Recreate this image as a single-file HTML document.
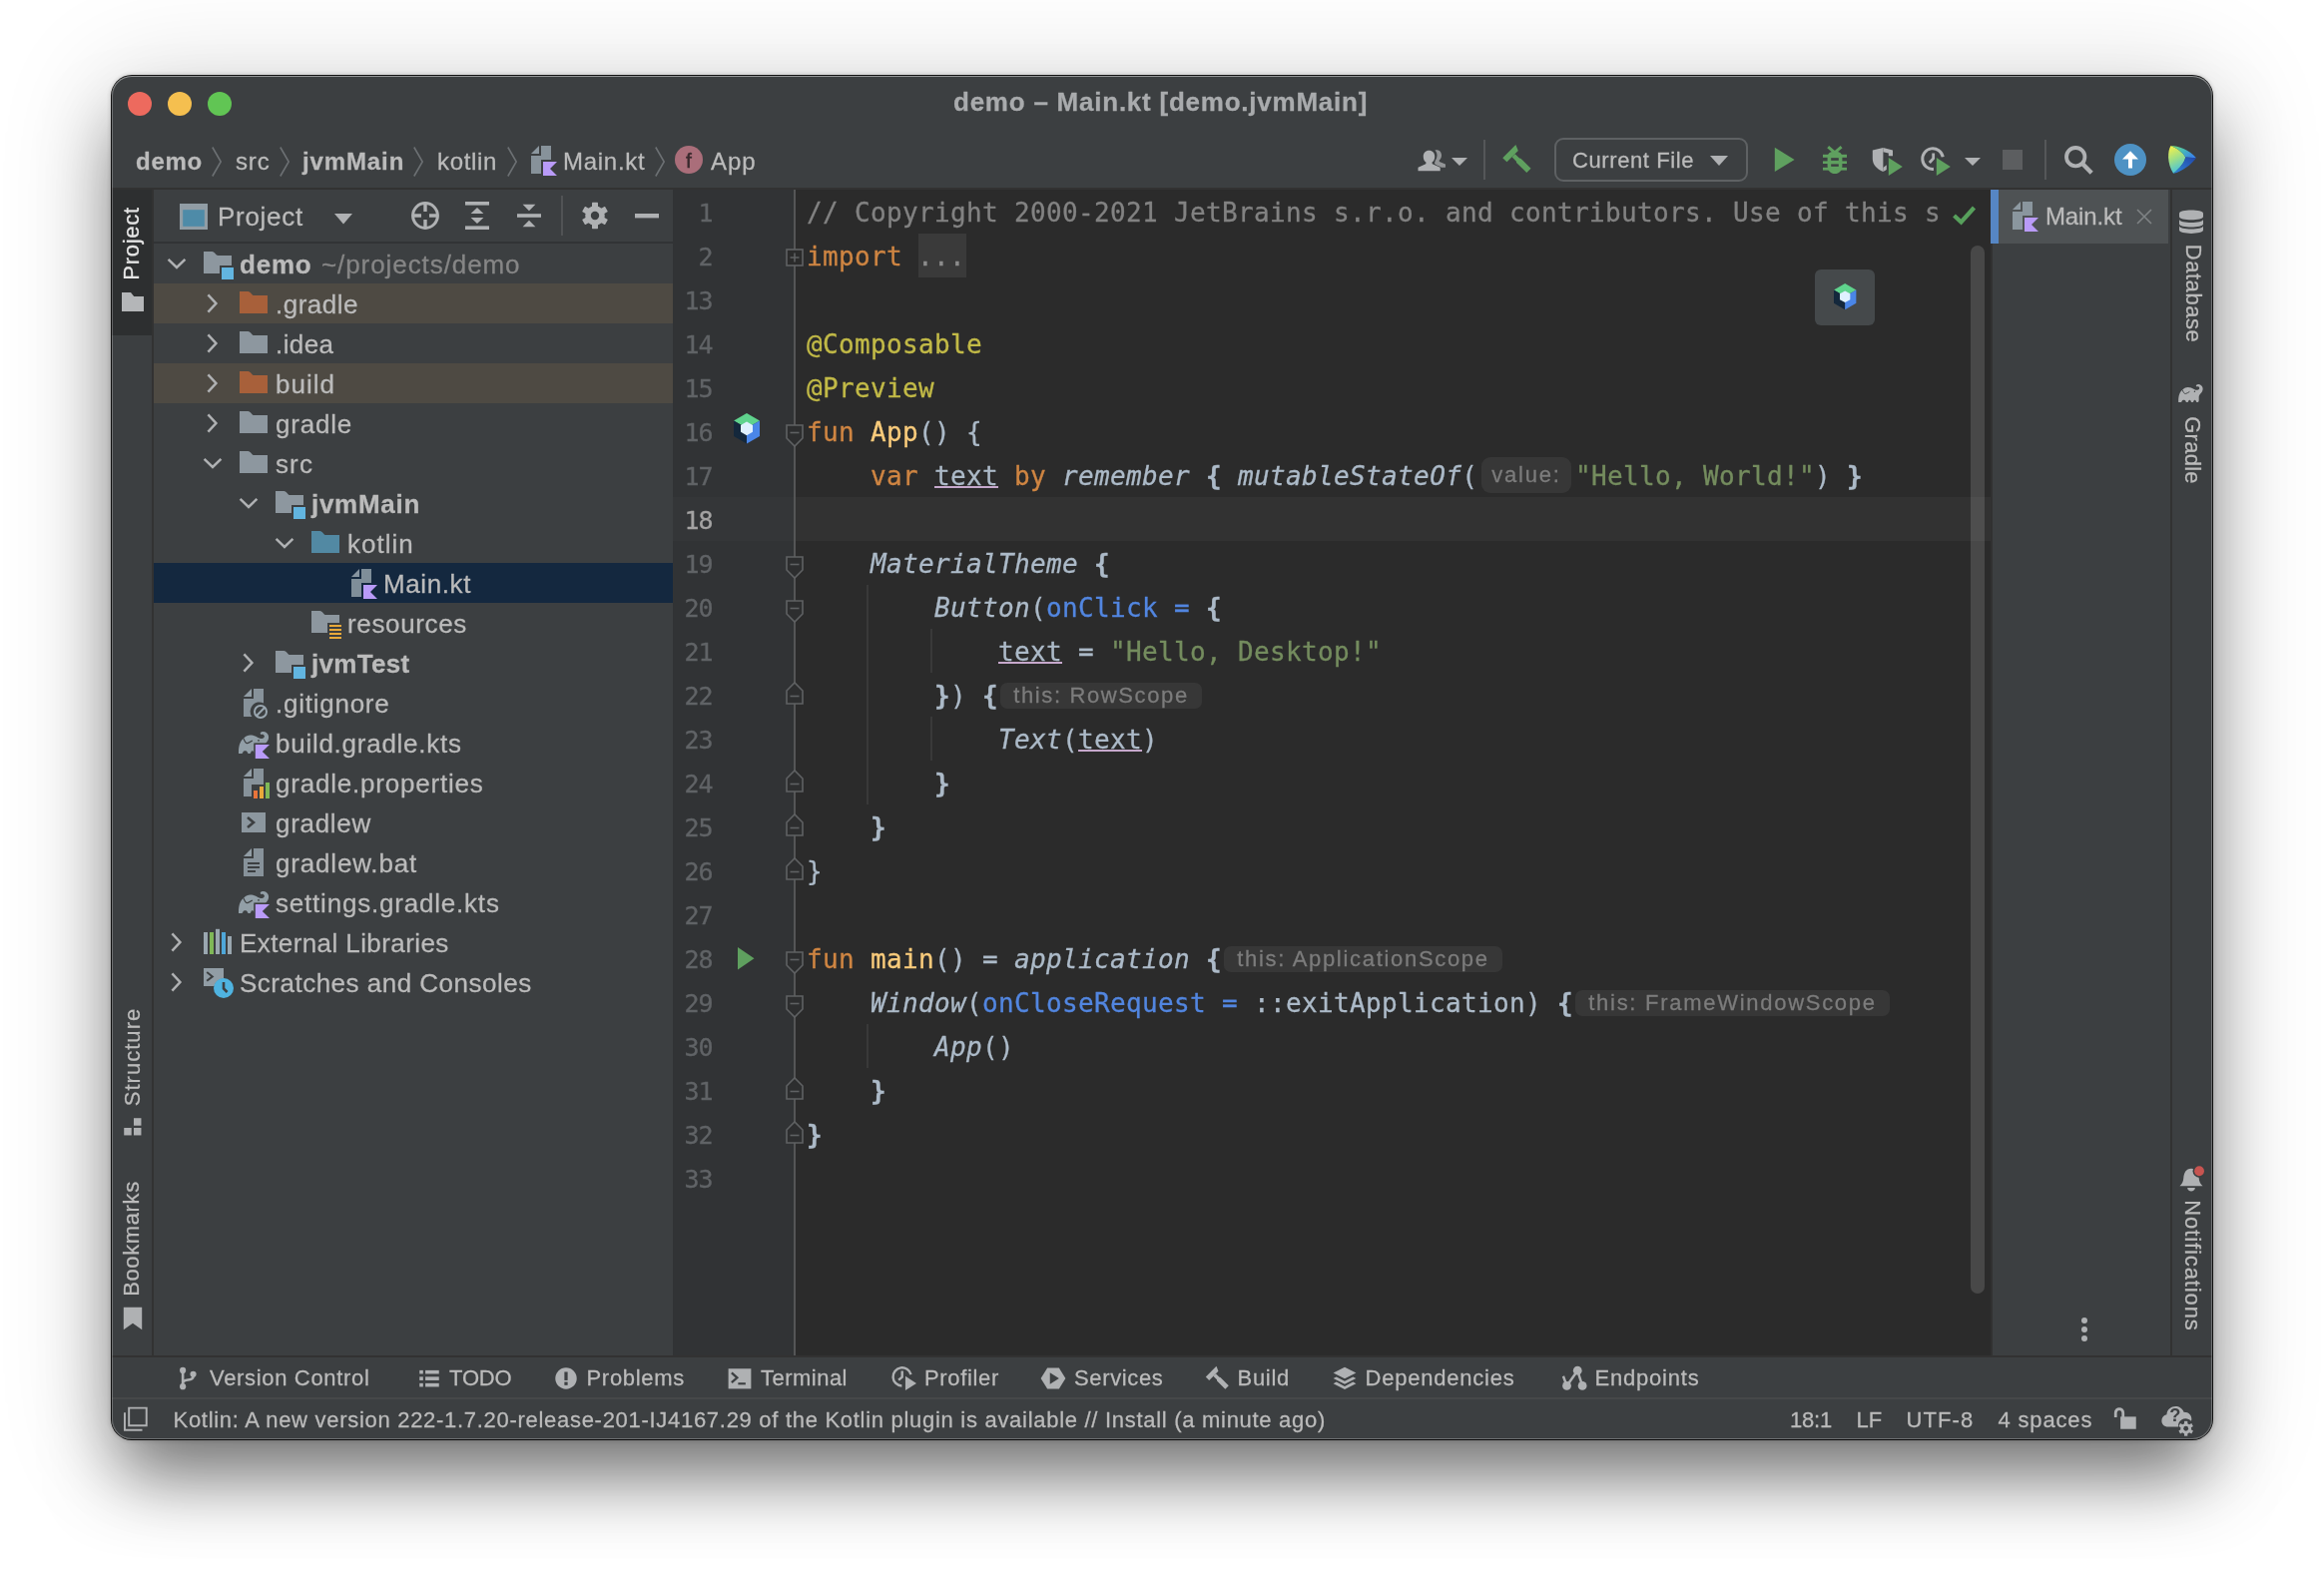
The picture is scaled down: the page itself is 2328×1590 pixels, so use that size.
<!DOCTYPE html>
<html lang="en"><head><meta charset="utf-8"><title>demo – Main.kt [demo.jvmMain]</title>
<style>

*{box-sizing:border-box;margin:0;padding:0}
html,body{width:2328px;height:1590px;overflow:hidden;background:#fff}
body{position:relative;font-family:"Liberation Sans","DejaVu Sans",sans-serif;color:#bbbbbb;-webkit-font-smoothing:antialiased;-webkit-text-stroke:.28px}
/* window shadow */
#shadow{position:absolute;left:112px;top:76px;width:2104px;height:1366px;border-radius:20px;
  box-shadow:0 0 0 1px rgba(0,0,0,.9), 0 0 4px 1px rgba(0,0,0,.2), 0 44px 70px -8px rgba(0,0,0,.50), 0 10px 110px 10px rgba(0,0,0,.14);}
#win{position:absolute;left:112px;top:76px;width:2104px;height:1366px;border-radius:20px;overflow:hidden;background:#3c3f41}
#abs{position:absolute;left:-112px;top:-76px;width:2328px;height:1590px;will-change:transform}
#rim{position:absolute;left:0;top:0;right:0;bottom:0;border-radius:20px;pointer-events:none;
  box-shadow:inset 0 0 0 1px rgba(255,255,255,.26), inset 0 1px 0 0 rgba(255,255,255,.25)}
.a{position:absolute}
.t{position:absolute;white-space:pre;line-height:1}
svg{position:absolute;overflow:visible}
.b{font-weight:bold}
/* fonts sizes */
.f26{font-size:26px}
.f24{font-size:24px}
.f22{font-size:22px}
/* tree */
.row{position:absolute;left:154px;width:520px;height:40px}
.row.ex{background:#4e4a43}
.row.sel{background:#14283f}
.tl{position:absolute;margin-top:1px;font-size:26px;line-height:30px;white-space:pre;color:#bbbbbb;letter-spacing:.35px}
.tl.b{letter-spacing:.1px}
.gray{color:#868686}
/* code */
.mono{font-family:"DejaVu Sans Mono","Liberation Mono",monospace;-webkit-text-stroke:.3px}
.ln{position:absolute;left:674px;width:39.5px;text-align:right;font-size:25px;height:44px;line-height:44px;padding-top:1.5px;color:#606366;white-space:pre;letter-spacing:-1px}
.cl{position:absolute;left:806px;height:44px;line-height:44px;padding-top:1px;font-size:26px;white-space:pre;color:#acbac8;letter-spacing:.348px}
.cl span{display:inline-block;height:44px;vertical-align:top}
.k{color:#cf8542}.c{color:#828282}.an{color:#c2ba47}.fd{color:#f9cb7b}.s{color:#748c5e}.na{color:#5286e0}
.i{font-style:italic}
.u{text-decoration:underline;text-decoration-color:#c6a8cc;text-decoration-thickness:1.7px;text-underline-offset:.5px}
.lb{font-weight:bold}
.hint{position:absolute;height:27px;border-radius:7px;background:#373737;color:#7c7c7c;font-size:22px;line-height:27px;white-space:pre;text-align:center;letter-spacing:.3px}
</style></head>
<body>
<div id="shadow"></div>
<div id="win"><div id="abs">
<div class="a" style="left:112px;top:190px;width:40px;height:1168px;background:#3c3f41"></div>
<div class="a" style="left:112px;top:190px;width:41px;height:146px;background:#2d2f30"></div>
<div class="a" style="left:152px;top:190px;width:2px;height:1168px;background:#323232"></div>
<div class="a" style="left:154px;top:190px;width:520px;height:1168px;background:#3c3f41"></div>
<div class="a" style="left:154px;top:242px;width:520px;height:2px;background:#313335"></div>
<div class="row " style="top:244px"></div>
<svg style="left:161px;top:248px" width="32" height="32" viewBox="0 0 16 16" ><path d="M3.8 5.9 L8 10 L12.2 5.9" fill="none" stroke="#afb1b3" stroke-width="1.25"/></svg>
<svg style="left:204px;top:248px" width="32" height="32" viewBox="0 0 16 16" ><path d="M0 1.95 H4.2 C5.6 1.95 6 4 7.3 4 H14 V9 H8 V13 H0 Z" fill="#8d979f"/><rect x="9" y="10" width="6" height="6" fill="#62b5e0"/></svg>
<div class="tl b" style="left:240px;top:249px;letter-spacing:0.789px">demo</div>
<div class="tl gray" style="left:322px;top:249px;letter-spacing:0.919px">~/projects/demo</div>
<div class="row ex" style="top:284px"></div>
<svg style="left:197px;top:288px" width="32" height="32" viewBox="0 0 16 16" ><path d="M5.7 3.7 L9.7 8 L5.7 12.3" fill="none" stroke="#afb1b3" stroke-width="1.25"/></svg>
<svg style="left:240px;top:288px" width="32" height="32" viewBox="0 0 16 16" ><path d="M0 1.95 H4.2 C5.6 1.95 6 4 7.3 4 H14 V13 H0 Z" fill="#a8603a"/></svg>
<div class="tl" style="left:276px;top:289px;letter-spacing:0.5px">.gradle</div>
<div class="row " style="top:324px"></div>
<svg style="left:197px;top:328px" width="32" height="32" viewBox="0 0 16 16" ><path d="M5.7 3.7 L9.7 8 L5.7 12.3" fill="none" stroke="#afb1b3" stroke-width="1.25"/></svg>
<svg style="left:240px;top:328px" width="32" height="32" viewBox="0 0 16 16" ><path d="M0 1.95 H4.2 C5.6 1.95 6 4 7.3 4 H14 V13 H0 Z" fill="#8d979f"/></svg>
<div class="tl" style="left:276px;top:329px;letter-spacing:0.422px">.idea</div>
<div class="row ex" style="top:364px"></div>
<svg style="left:197px;top:368px" width="32" height="32" viewBox="0 0 16 16" ><path d="M5.7 3.7 L9.7 8 L5.7 12.3" fill="none" stroke="#afb1b3" stroke-width="1.25"/></svg>
<svg style="left:240px;top:368px" width="32" height="32" viewBox="0 0 16 16" ><path d="M0 1.95 H4.2 C5.6 1.95 6 4 7.3 4 H14 V13 H0 Z" fill="#a8603a"/></svg>
<div class="tl" style="left:276px;top:369px;letter-spacing:1.012px">build</div>
<div class="row " style="top:404px"></div>
<svg style="left:197px;top:408px" width="32" height="32" viewBox="0 0 16 16" ><path d="M5.7 3.7 L9.7 8 L5.7 12.3" fill="none" stroke="#afb1b3" stroke-width="1.25"/></svg>
<svg style="left:240px;top:408px" width="32" height="32" viewBox="0 0 16 16" ><path d="M0 1.95 H4.2 C5.6 1.95 6 4 7.3 4 H14 V13 H0 Z" fill="#8d979f"/></svg>
<div class="tl" style="left:276px;top:409px;letter-spacing:0.786px">gradle</div>
<div class="row " style="top:444px"></div>
<svg style="left:197px;top:448px" width="32" height="32" viewBox="0 0 16 16" ><path d="M3.8 5.9 L8 10 L12.2 5.9" fill="none" stroke="#afb1b3" stroke-width="1.25"/></svg>
<svg style="left:240px;top:448px" width="32" height="32" viewBox="0 0 16 16" ><path d="M0 1.95 H4.2 C5.6 1.95 6 4 7.3 4 H14 V13 H0 Z" fill="#8d979f"/></svg>
<div class="tl" style="left:276px;top:449px;letter-spacing:1.109px">src</div>
<div class="row " style="top:484px"></div>
<svg style="left:233px;top:488px" width="32" height="32" viewBox="0 0 16 16" ><path d="M3.8 5.9 L8 10 L12.2 5.9" fill="none" stroke="#afb1b3" stroke-width="1.25"/></svg>
<svg style="left:276px;top:488px" width="32" height="32" viewBox="0 0 16 16" ><path d="M0 1.95 H4.2 C5.6 1.95 6 4 7.3 4 H14 V9 H8 V13 H0 Z" fill="#8d979f"/><rect x="9" y="10" width="6" height="6" fill="#62b5e0"/></svg>
<div class="tl b" style="left:312px;top:489px;letter-spacing:0.71px">jvmMain</div>
<div class="row " style="top:524px"></div>
<svg style="left:269px;top:528px" width="32" height="32" viewBox="0 0 16 16" ><path d="M3.8 5.9 L8 10 L12.2 5.9" fill="none" stroke="#afb1b3" stroke-width="1.25"/></svg>
<svg style="left:312px;top:528px" width="32" height="32" viewBox="0 0 16 16" ><path d="M0 1.95 H4.2 C5.6 1.95 6 4 7.3 4 H14 V13 H0 Z" fill="#5289a3"/></svg>
<div class="tl" style="left:348px;top:529px;letter-spacing:0.999px">kotlin</div>
<div class="row sel" style="top:564px"></div>
<svg style="left:348px;top:568px" width="32" height="32" viewBox="0 0 16 16" ><path d="M6 1 L2 5 H6 Z" fill="#9aa7b0" fill-opacity=".85"/><path d="M7 1 V6 H2 V15 H7 V8 H12 V1 Z" fill="#9aa7b0" fill-opacity=".8"/><path d="M8 9 H15 L11.5 12.5 L15 16 H8 Z" fill="#b99bf8"/></svg>
<div class="tl" style="left:384px;top:569px;letter-spacing:0.598px">Main.kt</div>
<div class="row " style="top:604px"></div>
<svg style="left:312px;top:608px" width="32" height="32" viewBox="0 0 16 16" ><path d="M0 1.95 H4.2 C5.6 1.95 6 4 7.3 4 H14 V8 H8 V13 H0 Z" fill="#8d979f"/><rect x="9" y="9" width="6" height="1" fill="#e8a93a"/><rect x="9" y="11" width="6" height="1" fill="#e8a93a"/><rect x="9" y="13" width="6" height="1" fill="#e8a93a"/><rect x="9" y="15" width="6" height="1" fill="#e8a93a"/></svg>
<div class="tl" style="left:348px;top:609px;letter-spacing:0.649px">resources</div>
<div class="row " style="top:644px"></div>
<svg style="left:233px;top:648px" width="32" height="32" viewBox="0 0 16 16" ><path d="M5.7 3.7 L9.7 8 L5.7 12.3" fill="none" stroke="#afb1b3" stroke-width="1.25"/></svg>
<svg style="left:276px;top:648px" width="32" height="32" viewBox="0 0 16 16" ><path d="M0 1.95 H4.2 C5.6 1.95 6 4 7.3 4 H14 V9 H8 V13 H0 Z" fill="#8d979f"/><rect x="9" y="10" width="6" height="6" fill="#62b5e0"/></svg>
<div class="tl b" style="left:312px;top:649px;letter-spacing:0.308px">jvmTest</div>
<div class="row " style="top:684px"></div>
<svg style="left:238px;top:688px" width="32" height="32" viewBox="0 0 16 16" ><path d="M7 1 L3 5 H7 Z" fill="#9aa7b0" fill-opacity=".9"/><path d="M8 1 V6 H3 V15 H7.2 A4.6 4.6 0 0 1 13 8.2 V1 Z" fill="#9aa7b0" fill-opacity=".8"/><circle cx="11.5" cy="12.5" r="3" fill="none" stroke="#9aa7b0" stroke-width="1"/><path d="M9.4 14.6 L13.6 10.4" stroke="#9aa7b0" stroke-width="1"/></svg>
<div class="tl" style="left:276px;top:689px;letter-spacing:0.753px">.gitignore</div>
<div class="row " style="top:724px"></div>
<svg style="left:240px;top:728px" width="32" height="32" viewBox="0 0 16 16" ><path d="M-0.5 13.5 C-0.6 9.5 0.3 7 2.2 5.7 C3.2 4.7 4.2 4.3 5.3 4.3 C6.8 4.3 8 4.9 9.2 5.5 C10 5.9 10.6 6.1 11.1 6 C12 5.9 12.6 5.3 12.4 4.6 C12.2 3.9 11.4 3.6 10.7 4 L10.3 3.2 C11 2.4 12.4 2.3 13.4 3 C14.4 3.8 14.8 5 14.4 6.2 C14.1 7.2 13.5 7.9 12.8 8.6 C12.3 9.2 12.1 9.8 12.1 10.6 V12.4 C12.1 13.1 11.7 13.5 11.2 13.5 C10.7 13.5 10.4 13.2 10.3 12.7 C10.1 12 9.1 12 8.9 12.7 C8.8 13.2 8.5 13.5 8 13.5 C7.5 13.5 7.2 13.2 7.1 12.7 C6.9 12 5.9 12 5.7 12.7 C5.6 13.2 5.3 13.5 4.8 13.5 C4.3 13.5 4 13.2 3.9 12.7 C3.6 11.9 2 11.9 1.7 12.7 C1.6 13.2 1.2 13.5 0.6 13.5 Z" fill="#9aa7b0" fill-opacity="0.92"/><path d="M2 6 C2.6 7.6 3.2 8.4 3.9 8.3 C4.8 8.1 5.6 7.5 6.4 7" fill="none" stroke="#3c3f41" stroke-width=".55"/><circle cx="9.5" cy="6.9" r=".45" fill="#3c3f41"/><path d="M7.1 8.2 H16 V16.5 H7.1 Z" fill="#3c3f41"/><path d="M7.9 9 H15 L11.4 12.5 L15 16 H7.9 Z" fill="#b99bf8"/></svg>
<div class="tl" style="left:276px;top:729px;letter-spacing:0.738px">build.gradle.kts</div>
<div class="row " style="top:764px"></div>
<svg style="left:238px;top:768px" width="32" height="32" viewBox="0 0 16 16" ><path d="M7 1 L3 5 H7 Z" fill="#9aa7b0" fill-opacity=".9"/><path d="M8 1 V6 H3 V15 H7 V9 H13 V1 Z" fill="#9aa7b0" fill-opacity=".8"/><rect x="8" y="12" width="2" height="4" fill="#e8743a"/><rect x="11" y="10" width="2" height="6" fill="#e8a93a"/><rect x="14" y="8" width="2" height="8" fill="#7fb857"/></svg>
<div class="tl" style="left:276px;top:769px;letter-spacing:0.787px">gradle.properties</div>
<div class="row " style="top:804px"></div>
<svg style="left:238px;top:808px" width="32" height="32" viewBox="0 0 16 16" ><rect x="2" y="3" width="12" height="10" fill="#9aa7b0" fill-opacity=".85"/><path d="M5 5.5 L8 8 L5 10.5" fill="none" stroke="#3c3f41" stroke-width="1.3"/></svg>
<div class="tl" style="left:276px;top:809px;letter-spacing:0.705px">gradlew</div>
<div class="row " style="top:844px"></div>
<svg style="left:238px;top:848px" width="32" height="32" viewBox="0 0 16 16" ><path d="M7 1 L3 5 H7 Z" fill="#9aa7b0" fill-opacity=".9"/><path d="M8 1 V6 H3 V15 H13 V1 Z" fill="#9aa7b0" fill-opacity=".8"/><rect x="5" y="8" width="6" height="1" fill="#3c3f41"/><rect x="5" y="10" width="6" height="1" fill="#3c3f41"/><rect x="5" y="12" width="4" height="1" fill="#3c3f41"/></svg>
<div class="tl" style="left:276px;top:849px;letter-spacing:0.82px">gradlew.bat</div>
<div class="row " style="top:884px"></div>
<svg style="left:240px;top:888px" width="32" height="32" viewBox="0 0 16 16" ><path d="M-0.5 13.5 C-0.6 9.5 0.3 7 2.2 5.7 C3.2 4.7 4.2 4.3 5.3 4.3 C6.8 4.3 8 4.9 9.2 5.5 C10 5.9 10.6 6.1 11.1 6 C12 5.9 12.6 5.3 12.4 4.6 C12.2 3.9 11.4 3.6 10.7 4 L10.3 3.2 C11 2.4 12.4 2.3 13.4 3 C14.4 3.8 14.8 5 14.4 6.2 C14.1 7.2 13.5 7.9 12.8 8.6 C12.3 9.2 12.1 9.8 12.1 10.6 V12.4 C12.1 13.1 11.7 13.5 11.2 13.5 C10.7 13.5 10.4 13.2 10.3 12.7 C10.1 12 9.1 12 8.9 12.7 C8.8 13.2 8.5 13.5 8 13.5 C7.5 13.5 7.2 13.2 7.1 12.7 C6.9 12 5.9 12 5.7 12.7 C5.6 13.2 5.3 13.5 4.8 13.5 C4.3 13.5 4 13.2 3.9 12.7 C3.6 11.9 2 11.9 1.7 12.7 C1.6 13.2 1.2 13.5 0.6 13.5 Z" fill="#9aa7b0" fill-opacity="0.92"/><path d="M2 6 C2.6 7.6 3.2 8.4 3.9 8.3 C4.8 8.1 5.6 7.5 6.4 7" fill="none" stroke="#3c3f41" stroke-width=".55"/><circle cx="9.5" cy="6.9" r=".45" fill="#3c3f41"/><path d="M7.1 8.2 H16 V16.5 H7.1 Z" fill="#3c3f41"/><path d="M7.9 9 H15 L11.4 12.5 L15 16 H7.9 Z" fill="#b99bf8"/></svg>
<div class="tl" style="left:276px;top:889px;letter-spacing:0.797px">settings.gradle.kts</div>
<div class="row " style="top:924px"></div>
<svg style="left:161px;top:928px" width="32" height="32" viewBox="0 0 16 16" ><path d="M5.7 3.7 L9.7 8 L5.7 12.3" fill="none" stroke="#afb1b3" stroke-width="1.25"/></svg>
<svg style="left:202px;top:928px" width="32" height="32" viewBox="0 0 16 16" ><rect x="1" y="3" width="2" height="11" fill="#9aa7b0"/><rect x="4" y="3" width="2" height="11" fill="#7fb857"/><rect x="7" y="1.4" width="2" height="12.6" fill="#9aa7b0"/><rect x="10" y="3" width="2" height="11" fill="#4fa7d9"/><rect x="13" y="5" width="2" height="9" fill="#9aa7b0"/></svg>
<div class="tl" style="left:240px;top:929px;letter-spacing:0.41px">External Libraries</div>
<div class="row " style="top:964px"></div>
<svg style="left:161px;top:968px" width="32" height="32" viewBox="0 0 16 16" ><path d="M5.7 3.7 L9.7 8 L5.7 12.3" fill="none" stroke="#afb1b3" stroke-width="1.25"/></svg>
<svg style="left:202px;top:968px" width="32" height="32" viewBox="0 0 16 16" ><path d="M1 1 H11 V6.2 A5 5 0 0 0 6.3 10 H1 Z" fill="#9aa7b0" fill-opacity=".9"/><path d="M2.6 3 L5.4 5.2 L2.6 7.4" fill="none" stroke="#3c3f41" stroke-width="1"/><circle cx="11" cy="11" r="5" fill="#4fb3e0"/><path d="M11 8 V11.2 L12.8 13" fill="none" stroke="#3c3f41" stroke-width="1.3"/></svg>
<div class="tl" style="left:240px;top:969px;letter-spacing:0.494px">Scratches and Consoles</div>
<div class="a" style="left:112px;top:76px;width:2104px;height:112px;background:#3c3f41"></div>
<div class="a" style="left:112px;top:188px;width:2104px;height:2px;background:#323232"></div>
<div class="a" style="left:128px;top:92px;width:24px;height:24px;border-radius:50%;background:#ed6a5e"></div>
<div class="a" style="left:168px;top:92px;width:24px;height:24px;border-radius:50%;background:#f5bf4f"></div>
<div class="a" style="left:208px;top:92px;width:24px;height:24px;border-radius:50%;background:#61c554"></div>
<div class="t" style="left:955px;top:89px;font-size:26px;letter-spacing:0.764px;font-weight:bold;color:#a9abad;">demo – Main.kt [demo.jvmMain]</div>
<div class="t" style="left:136px;top:150px;font-size:24px;letter-spacing:0.746px;font-weight:bold;">demo</div>
<svg style="left:212px;top:146.5px" width="10" height="30" viewBox="0 0 10 30" ><path d="M0.8 0.5 L9.2 15 L0.8 29.5" fill="none" stroke="#6c7073" stroke-width="1.6"/></svg>
<div class="t" style="left:236px;top:150px;font-size:24px;letter-spacing:0.833px;">src</div>
<svg style="left:280px;top:146.5px" width="10" height="30" viewBox="0 0 10 30" ><path d="M0.8 0.5 L9.2 15 L0.8 29.5" fill="none" stroke="#6c7073" stroke-width="1.6"/></svg>
<div class="t" style="left:303px;top:150px;font-size:24px;letter-spacing:0.881px;font-weight:bold;">jvmMain</div>
<svg style="left:414px;top:146.5px" width="10" height="30" viewBox="0 0 10 30" ><path d="M0.8 0.5 L9.2 15 L0.8 29.5" fill="none" stroke="#6c7073" stroke-width="1.6"/></svg>
<div class="t" style="left:438px;top:150px;font-size:24px;letter-spacing:0.661px;">kotlin</div>
<svg style="left:508px;top:146.5px" width="10" height="30" viewBox="0 0 10 30" ><path d="M0.8 0.5 L9.2 15 L0.8 29.5" fill="none" stroke="#6c7073" stroke-width="1.6"/></svg>
<svg style="left:528px;top:144px" width="32" height="32" viewBox="0 0 16 16" ><path d="M6 1 L2 5 H6 Z" fill="#9aa7b0" fill-opacity=".85"/><path d="M7 1 V6 H2 V15 H7 V8 H12 V1 Z" fill="#9aa7b0" fill-opacity=".8"/><path d="M8 9 H15 L11.5 12.5 L15 16 H8 Z" fill="#b99bf8"/></svg>
<div class="t" style="left:564px;top:150px;font-size:24px;letter-spacing:0.734px;">Main.kt</div>
<svg style="left:656px;top:146.5px" width="10" height="30" viewBox="0 0 10 30" ><path d="M0.8 0.5 L9.2 15 L0.8 29.5" fill="none" stroke="#6c7073" stroke-width="1.6"/></svg>
<svg style="left:676px;top:146px" width="28" height="28" viewBox="0 0 28 28" ><circle cx="14" cy="14" r="14" fill="#aa6e7a"/><text x="14" y="21.6" text-anchor="middle" font-family="Liberation Sans, sans-serif" font-size="21" fill="#3a2a2e" stroke="#3a2a2e" stroke-width=".5">f</text></svg>
<div class="t" style="left:712px;top:150px;font-size:24px;letter-spacing:0.932px;">App</div>
<svg style="left:1418px;top:144px" width="32" height="32" viewBox="0 0 16 16" ><g transform="translate(0.5 2.3) scale(.94 .83)"><path d="M10.6 1 C12.3 1 13.3 2.3 13.3 4.2 C13.3 5.6 12.8 6.7 12 7.3 L12.2 8 L15.4 9.6 V11.5 H11.6 L9.5 9.2 L10 7.3 C10.6 6.5 10.9 5.2 10.9 4.2 C10.9 3 10.5 1.9 9.8 1.2 C10 1.1 10.3 1 10.6 1 Z" fill="#afb1b3" fill-opacity=".75"/><path d="M6.6 1.3 C8.5 1.3 9.7 2.8 9.7 5 C9.7 6.5 9.1 7.8 8.2 8.5 L8.4 9.4 L12.6 11.5 V13.6 H0.8 V11.5 L4.9 9.4 L5.1 8.5 C4.2 7.8 3.6 6.5 3.6 5 C3.6 2.8 4.8 1.3 6.6 1.3 Z" fill="#afb1b3" stroke="#3c3f41" stroke-width=".7" paint-order="stroke"/></g></svg>
<svg style="left:1454px;top:158px" width="16" height="8" viewBox="0 0 16 8" ><path d="M0 0 H16 L8.0 8 Z" fill="#afb1b3"/></svg>
<div class="a" style="left:1486px;top:140px;width:2px;height:40px;background:#555759"></div>
<svg style="left:1503px;top:144px" width="32" height="32" viewBox="0 0 16 16" ><g transform="translate(5.5 4.8) rotate(-45)" fill="#5fa05f"><path d="M-4.7 -1.5 H4.6 L3.3 1.5 H-4.7 Z"/><path d="M-1.1 1.5 H1.1 V4.6 L1.5 5.1 V12.3 H-1.5 V5.1 L-1.1 4.6 Z"/></g></svg>
<div class="a" style="left:1557px;top:138px;width:194px;height:44px;border:2px solid #5e6163;border-radius:9px"></div>
<div class="t" style="left:1575px;top:150px;font-size:22px;letter-spacing:0.598px;">Current File</div>
<svg style="left:1713px;top:156px" width="18" height="10" viewBox="0 0 18 10" ><path d="M0 0 H18 L9.0 10 Z" fill="#afb1b3"/></svg>
<svg style="left:1772px;top:144px" width="32" height="32" viewBox="0 0 16 16" ><path d="M2.9 1.9 L12.8 7.95 L2.9 14 Z" fill="#5fa05f"/></svg>
<svg style="left:1822px;top:144px" width="32" height="32" viewBox="0 0 16 16" ><path d="M4.3 6.6 C4.3 4.8 5.8 3.7 8 3.7 C10.2 3.7 11.7 4.8 11.7 6.6 V11 C11.7 13.4 10.2 15.05 8 15.05 C5.8 15.05 4.3 13.4 4.3 11 Z" fill="#5fa05f"/><path d="M4.6 1.6 L7.95 4.4 L11.3 1.6" stroke="#5fa05f" stroke-width="1.5" fill="none"/><rect x="2" y="5.4" width="12" height="1.5" fill="#5fa05f"/><rect x="2" y="8.7" width="12" height="1.3" fill="#5fa05f"/><rect x="2" y="11.9" width="12" height="1.4" fill="#5fa05f"/><rect x="6.1" y="7.1" width="3.8" height="1.3" fill="#3c3f41"/><rect x="6.1" y="10.2" width="3.8" height="1.2" fill="#3c3f41"/></svg>
<svg style="left:1874px;top:144px" width="32" height="32" viewBox="0 0 16 16" ><path d="M0.9 3.2 L6.2 2 V14 C3 12.8 0.9 10.4 0.9 7.5 Z" fill="#afb1b3"/><path d="M6.2 2 L11 3.2 V6.1 H8.9 V4.7 L6.2 4.1 Z" fill="#afb1b3"/><path d="M6.2 12 L7.9 10.6 V13 L6.2 14 Z" fill="#afb1b3"/><path d="M8.9 7 L15.9 11.5 L8.9 16 Z" fill="#5fa05f" stroke="#3c3f41" stroke-width="1.1" paint-order="stroke"/></svg>
<svg style="left:1922px;top:144px" width="32" height="32" viewBox="0 0 16 16" ><path d="M7.48 12.67 A5.15 5.15 0 1 1 12.1 6.65" fill="none" stroke="#afb1b3" stroke-width="1.5"/><path d="M7.34 4.7 V7.3 L5.4 9.5" fill="none" stroke="#afb1b3" stroke-width="1.4"/><path d="M8.9 7 L15.9 11.5 L8.9 16 Z" fill="#5fa05f" stroke="#3c3f41" stroke-width="1.1" paint-order="stroke"/></svg>
<svg style="left:1968px;top:158px" width="16" height="8" viewBox="0 0 16 8" ><path d="M0 0 H16 L8.0 8 Z" fill="#afb1b3"/></svg>
<div class="a" style="left:2006px;top:150px;width:20px;height:20px;background:#5c5e60"></div>
<div class="a" style="left:2048px;top:140px;width:2px;height:40px;background:#555759"></div>
<svg style="left:2066px;top:144px" width="32" height="32" viewBox="0 0 16 16" ><circle cx="6.6" cy="6.6" r="4.6" fill="none" stroke="#afb1b3" stroke-width="1.9"/><path d="M9.9 9.9 L14.6 14.6" stroke="#afb1b3" stroke-width="2.2"/></svg>
<svg style="left:2118px;top:144px" width="32" height="32" viewBox="0 0 16 16" ><circle cx="8" cy="8" r="8" fill="#4e92c4"/><path d="M8 3.6 L12 7.8 H9 V12.2 H7 V7.8 H4 Z" fill="#fff"/></svg>
<svg style="left:2170px;top:144px" width="32" height="32" viewBox="0 0 16 16" ><defs><linearGradient id="sgA" x1="0.2" y1="0" x2="0.5" y2="1"><stop offset="0" stop-color="#f6f04a"/><stop offset=".5" stop-color="#9ade8a"/><stop offset="1" stop-color="#3fc0e4"/></linearGradient><linearGradient id="sgB" x1="0" y1="0" x2="1" y2="0.6"><stop offset="0" stop-color="#7fe070"/><stop offset=".55" stop-color="#45b8b8"/><stop offset="1" stop-color="#3b86e6"/></linearGradient><linearGradient id="sgC" x1="0" y1="1" x2="1" y2="0"><stop offset="0" stop-color="#2f86da"/><stop offset="1" stop-color="#2346a6"/></linearGradient></defs><path d="M2.3 1 C0.6 3.5 0.3 10 3.57 14.9 C7 12 9.3 9 9.6 6.7 C8.5 4.5 5 2 2.3 1 Z" fill="url(#sgA)"/><path d="M2.3 1 C6 1 11.5 3 15 7.07 L9.6 6.7 C8.5 4.5 5 2 2.3 1 Z" fill="url(#sgB)"/><path d="M9.6 6.7 L15 7.07 C12.5 10.5 8 13.8 3.57 14.9 C7 12 9.3 9 9.6 6.7 Z" fill="url(#sgC)"/></svg>
<svg style="left:178px;top:201px" width="32" height="32" viewBox="0 0 16 16" ><rect x="1" y="1.5" width="14" height="13" fill="#9aa7b0" fill-opacity=".9"/><rect x="2.6" y="4.6" width="10.8" height="8.3" fill="#4e8ba8"/></svg>
<div class="t" style="left:218px;top:204px;font-size:26px;letter-spacing:0.697px;">Project</div>
<svg style="left:335px;top:214px" width="18" height="10.5" viewBox="0 0 18 10.5" ><path d="M0 0 H18 L9.0 10.5 Z" fill="#afb1b3"/></svg>
<svg style="left:410px;top:200px" width="32" height="32" viewBox="0 0 16 16" ><circle cx="8" cy="8" r="6.2" fill="none" stroke="#afb1b3" stroke-width="1.5"/><path d="M8 1.4 V6 M8 10 V14.6 M1.4 8 H6 M10 8 H14.6" stroke="#afb1b3" stroke-width="1.7"/></svg>
<svg style="left:462px;top:200px" width="32" height="32" viewBox="0 0 16 16" ><rect x="2" y="1" width="12" height="1.8" fill="#afb1b3"/><rect x="2" y="13.2" width="12" height="1.8" fill="#afb1b3"/><path d="M8 4 L11.2 7 H4.8 Z M8 12 L11.2 9 H4.8 Z" fill="#afb1b3"/></svg>
<svg style="left:514px;top:200px" width="32" height="32" viewBox="0 0 16 16" ><rect x="2" y="7.1" width="12" height="1.8" fill="#afb1b3"/><path d="M8 5.6 L11.2 2.4 H4.8 Z M8 10.4 L11.2 13.6 H4.8 Z" fill="#afb1b3"/></svg>
<div class="a" style="left:562px;top:196px;width:2px;height:40px;background:#515355"></div>
<svg style="left:580px;top:200px" width="32" height="32" viewBox="0 0 16 16" ><g transform="translate(8 8)"><rect x="-1.5" y="-6.6" width="3" height="13.2" rx=".3" fill="#afb1b3" transform="rotate(0)"/><rect x="-1.5" y="-6.6" width="3" height="13.2" rx=".3" fill="#afb1b3" transform="rotate(60)"/><rect x="-1.5" y="-6.6" width="3" height="13.2" rx=".3" fill="#afb1b3" transform="rotate(120)"/><circle r="4.9" fill="#afb1b3"/><circle r="2.1" fill="#3c3f41"/></g></svg>
<svg style="left:632px;top:200px" width="32" height="32" viewBox="0 0 16 16" ><rect x="2" y="7" width="12" height="2.2" fill="#afb1b3"/></svg>
<div class="a" style="left:674px;top:190px;width:1320px;height:1168px;background:#2b2b2b"></div>
<div class="a" style="left:674px;top:190px;width:122px;height:1168px;background:#313335"></div>
<div class="a" style="left:674px;top:498px;width:1320px;height:44px;background:#323232"></div>
<div class="a" style="left:674px;top:498px;width:122px;height:44px;background:#343638"></div>
<div class="a" style="left:795px;top:190px;width:2px;height:1168px;background:#555657"></div>
<div class="a" style="left:868px;top:586px;width:2px;height:220px;background:#393939"></div>
<div class="a" style="left:932px;top:630px;width:2px;height:44px;background:#393939"></div>
<div class="a" style="left:932px;top:718px;width:2px;height:44px;background:#393939"></div>
<div class="a" style="left:868px;top:1026px;width:2px;height:44px;background:#393939"></div>
<div class="a" style="left:920px;top:234px;width:48px;height:44px;background:#3a3a3a"></div>
<div class="cl mono" style="left:919px;top:234px;color:#8c8c8c">...</div>
<div class="ln mono" style="top:190px">1</div>
<div class="ln mono" style="top:234px">2</div>
<div class="ln mono" style="top:278px">13</div>
<div class="ln mono" style="top:322px">14</div>
<div class="ln mono" style="top:366px">15</div>
<div class="ln mono" style="top:410px">16</div>
<div class="ln mono" style="top:454px">17</div>
<div class="ln mono" style="top:498px;color:#a4a3a3">18</div>
<div class="ln mono" style="top:542px">19</div>
<div class="ln mono" style="top:586px">20</div>
<div class="ln mono" style="top:630px">21</div>
<div class="ln mono" style="top:674px">22</div>
<div class="ln mono" style="top:718px">23</div>
<div class="ln mono" style="top:762px">24</div>
<div class="ln mono" style="top:806px">25</div>
<div class="ln mono" style="top:850px">26</div>
<div class="ln mono" style="top:894px">27</div>
<div class="ln mono" style="top:938px">28</div>
<div class="ln mono" style="top:982px">29</div>
<div class="ln mono" style="top:1026px">30</div>
<div class="ln mono" style="top:1070px">31</div>
<div class="ln mono" style="top:1114px">32</div>
<div class="ln mono" style="top:1158px">33</div>
<div class="cl mono" style="left:808px;top:190px"><span class="c">// Copyright 2000-2021 JetBrains s.r.o. and contributors. Use of this s</span></div>
<div class="cl mono" style="left:808px;top:234px"><span class="k">import </span></div>
<div class="cl mono" style="left:808px;top:322px"><span class="an">@Composable</span></div>
<div class="cl mono" style="left:808px;top:366px"><span class="an">@Preview</span></div>
<div class="cl mono" style="left:808px;top:410px"><span class="k">fun </span><span class="fd">App</span>() {</div>
<div class="cl mono" style="left:872px;top:454px"><span class="k">var </span><span class="u">text</span><span class="k"> by </span><span class="i">remember</span> <span class="lb">{</span> <span class="i">mutableStateOf</span>(</div>
<div class="cl mono" style="left:1578.0px;top:454px"><span class="s">"Hello, World!"</span>) <span class="lb">}</span></div>
<div class="cl mono" style="left:872px;top:542px"><span class="i">MaterialTheme</span> <span class="lb">{</span></div>
<div class="cl mono" style="left:936px;top:586px"><span class="i">Button</span>(<span class="na">onClick =</span> <span class="lb">{</span></div>
<div class="cl mono" style="left:1000px;top:630px"><span class="u">text</span> = <span class="s">"Hello, Desktop!"</span></div>
<div class="cl mono" style="left:936px;top:674px"><span class="lb">}</span>) <span class="lb">{</span></div>
<div class="cl mono" style="left:1000px;top:718px"><span class="i">Text</span>(<span class="u">text</span>)</div>
<div class="cl mono" style="left:936px;top:762px"><span class="lb">}</span></div>
<div class="cl mono" style="left:872px;top:806px"><span class="lb">}</span></div>
<div class="cl mono" style="left:808px;top:850px">}</div>
<div class="cl mono" style="left:808px;top:938px"><span class="k">fun </span><span class="fd">main</span>() = <span class="i">application</span> <span class="lb">{</span></div>
<div class="cl mono" style="left:872px;top:982px"><span class="i">Window</span>(<span class="na">onCloseRequest =</span> ::exitApplication) <span class="lb">{</span></div>
<div class="cl mono" style="left:936px;top:1026px"><span class="i">App</span>()</div>
<div class="cl mono" style="left:872px;top:1070px"><span class="lb">}</span></div>
<div class="cl mono" style="left:808px;top:1114px"><span class="lb">}</span></div>
<div class="hint" style="left:1484px;top:458px;width:90px;height:36px;line-height:36px;border-radius:9px;letter-spacing:1.797px">value:</div>
<div class="hint" style="left:1002px;top:684px;width:202px;height:26px;line-height:25px;letter-spacing:1.617px">this: RowScope</div>
<div class="hint" style="left:1226px;top:948px;width:279px;height:26px;line-height:25px;letter-spacing:1.692px">this: ApplicationScope</div>
<div class="hint" style="left:1578px;top:992px;width:315px;height:26px;line-height:25px;letter-spacing:1.72px">this: FrameWindowScope</div>
<svg style="left:787px;top:249px" width="18" height="18" viewBox="0 0 18 18" ><rect x="1" y="1" width="16" height="16" fill="#2b2b2b" stroke="#5f6163" stroke-width="1.6"/><path d="M4.5 9 H13.5 M9 4.5 V13.5" stroke="#5f6163" stroke-width="1.6"/></svg>
<svg style="left:787px;top:425px" width="18" height="23" viewBox="0 0 18 23" ><path d="M1 1 H17 V14 L9 22 L1 14 Z" fill="#2d2e2f" stroke="#5f6163" stroke-width="1.6"/><path d="M4.5 8.5 H13.5" stroke="#5f6163" stroke-width="1.6"/></svg>
<svg style="left:787px;top:557px" width="18" height="23" viewBox="0 0 18 23" ><path d="M1 1 H17 V14 L9 22 L1 14 Z" fill="#2d2e2f" stroke="#5f6163" stroke-width="1.6"/><path d="M4.5 8.5 H13.5" stroke="#5f6163" stroke-width="1.6"/></svg>
<svg style="left:787px;top:601px" width="18" height="23" viewBox="0 0 18 23" ><path d="M1 1 H17 V14 L9 22 L1 14 Z" fill="#2d2e2f" stroke="#5f6163" stroke-width="1.6"/><path d="M4.5 8.5 H13.5" stroke="#5f6163" stroke-width="1.6"/></svg>
<svg style="left:787px;top:953px" width="18" height="23" viewBox="0 0 18 23" ><path d="M1 1 H17 V14 L9 22 L1 14 Z" fill="#2d2e2f" stroke="#5f6163" stroke-width="1.6"/><path d="M4.5 8.5 H13.5" stroke="#5f6163" stroke-width="1.6"/></svg>
<svg style="left:787px;top:997px" width="18" height="23" viewBox="0 0 18 23" ><path d="M1 1 H17 V14 L9 22 L1 14 Z" fill="#2d2e2f" stroke="#5f6163" stroke-width="1.6"/><path d="M4.5 8.5 H13.5" stroke="#5f6163" stroke-width="1.6"/></svg>
<svg style="left:787px;top:683px" width="18" height="23" viewBox="0 0 18 23" ><path d="M1 22 H17 V9 L9 1 L1 9 Z" fill="#2d2e2f" stroke="#5f6163" stroke-width="1.6"/><path d="M4.5 14.5 H13.5" stroke="#5f6163" stroke-width="1.6"/></svg>
<svg style="left:787px;top:771px" width="18" height="23" viewBox="0 0 18 23" ><path d="M1 22 H17 V9 L9 1 L1 9 Z" fill="#2d2e2f" stroke="#5f6163" stroke-width="1.6"/><path d="M4.5 14.5 H13.5" stroke="#5f6163" stroke-width="1.6"/></svg>
<svg style="left:787px;top:815px" width="18" height="23" viewBox="0 0 18 23" ><path d="M1 22 H17 V9 L9 1 L1 9 Z" fill="#2d2e2f" stroke="#5f6163" stroke-width="1.6"/><path d="M4.5 14.5 H13.5" stroke="#5f6163" stroke-width="1.6"/></svg>
<svg style="left:787px;top:859px" width="18" height="23" viewBox="0 0 18 23" ><path d="M1 22 H17 V9 L9 1 L1 9 Z" fill="#2d2e2f" stroke="#5f6163" stroke-width="1.6"/><path d="M4.5 14.5 H13.5" stroke="#5f6163" stroke-width="1.6"/></svg>
<svg style="left:787px;top:1079px" width="18" height="23" viewBox="0 0 18 23" ><path d="M1 22 H17 V9 L9 1 L1 9 Z" fill="#2d2e2f" stroke="#5f6163" stroke-width="1.6"/><path d="M4.5 14.5 H13.5" stroke="#5f6163" stroke-width="1.6"/></svg>
<svg style="left:787px;top:1123px" width="18" height="23" viewBox="0 0 18 23" ><path d="M1 22 H17 V9 L9 1 L1 9 Z" fill="#2d2e2f" stroke="#5f6163" stroke-width="1.6"/><path d="M4.5 14.5 H13.5" stroke="#5f6163" stroke-width="1.6"/></svg>
<svg style="left:734.5px;top:414px" width="26.0" height="30.5" viewBox="0 0 26 30.5" ><path d="M13 0 L26 7.5 L13 15 L0 7.5 Z" fill="#5fd38d"/><path d="M0 7.5 L13 15 V30.5 L0 23 Z" fill="#14283c"/><path d="M26 7.5 L13 15 V30.5 L26 23 Z" fill="#4a86e8"/><path d="M13 8.6 L19 12 V18.8 L13 22.2 L7 18.8 V12 Z" fill="#dff1ff"/></svg>
<svg style="left:738.75px;top:948.75px" width="16.5" height="22.5" viewBox="0 0 16.5 22.5" ><path d="M0 0 L16.5 11.25 L0 22.5 Z" fill="#5fa05f"/></svg>
<div class="a" style="left:1946px;top:190px;width:48px;height:44px;background:#2b2b2b"></div>
<svg style="left:1956px;top:206px" width="23" height="19" viewBox="0 0 23 19" ><path d="M1.5 10 L8.5 16.5 L21.5 2" fill="none" stroke="#57a05c" stroke-width="4.2"/></svg>
<div class="a" style="left:1818px;top:270px;width:60px;height:56px;border-radius:6px;background:#45494b"></div>
<svg style="left:1837px;top:284px" width="22.36" height="26.23" viewBox="0 0 26 30.5" ><path d="M13 0 L26 7.5 L13 15 L0 7.5 Z" fill="#5fd38d"/><path d="M0 7.5 L13 15 V30.5 L0 23 Z" fill="#14283c"/><path d="M26 7.5 L13 15 V30.5 L26 23 Z" fill="#4a86e8"/><path d="M13 8.6 L19 12 V18.8 L13 22.2 L7 18.8 V12 Z" fill="#dff1ff"/></svg>
<div class="a" style="left:1974px;top:246px;width:14px;height:1050px;border-radius:7px;background:rgba(255,255,255,.14)"></div>
<div class="a" style="left:1994px;top:190px;width:2px;height:1168px;background:#313131"></div>
<div class="a" style="left:1996px;top:190px;width:178px;height:1168px;background:#3c3f41"></div>
<div class="a" style="left:1994px;top:190px;width:178px;height:54px;background:#4e5254"></div>
<div class="a" style="left:1994px;top:190px;width:8px;height:54px;background:#5686c4"></div>
<svg style="left:2012px;top:200px" width="32" height="32" viewBox="0 0 16 16" ><path d="M6 1 L2 5 H6 Z" fill="#9aa7b0" fill-opacity=".85"/><path d="M7 1 V6 H2 V15 H7 V8 H12 V1 Z" fill="#9aa7b0" fill-opacity=".8"/><path d="M8 9 H15 L11.5 12.5 L15 16 H8 Z" fill="#b99bf8"/></svg>
<div class="t" style="left:2049px;top:205px;font-size:24px;letter-spacing:-0.123px">Main.kt</div>
<svg style="left:2140px;top:209px" width="16" height="16" viewBox="0 0 16 16" ><path d="M1 1 L15 15 M15 1 L1 15" stroke="#7f8385" stroke-width="1.6"/></svg>
<svg style="left:2085px;top:1320px" width="6" height="24" viewBox="0 0 6 24" ><circle cx="3" cy="3" r="3" fill="#afb1b3"/><circle cx="3" cy="12" r="3" fill="#afb1b3"/><circle cx="3" cy="21" r="3" fill="#afb1b3"/></svg>
<div class="a" style="left:2174px;top:190px;width:2px;height:1168px;background:#323232"></div>
<div class="a" style="left:2176px;top:190px;width:40px;height:1168px;background:#3c3f41"></div>
<svg style="left:2179px;top:207px" width="32" height="32" viewBox="0 0 16 16" ><path d="M2 3.4 C2 1.2 14 1.2 14 3.4 V5 C14 7.2 2 7.2 2 5 Z" fill="#afb1b3"/><path d="M2 6.4 C2 8.600000000000001 14 8.600000000000001 14 6.4 V8.600000000000001 C14 10.8 2 10.8 2 8.600000000000001 Z" fill="#afb1b3"/><path d="M2 9.6 C2 11.8 14 11.8 14 9.6 V11.8 C14 14.0 2 14.0 2 11.8 Z" fill="#afb1b3"/></svg>
<svg style="left:2182.7px;top:381px" width="26" height="26" viewBox="0 0 16 16" ><path d="M-0.5 13.5 C-0.6 9.5 0.3 7 2.2 5.7 C3.2 4.7 4.2 4.3 5.3 4.3 C6.8 4.3 8 4.9 9.2 5.5 C10 5.9 10.6 6.1 11.1 6 C12 5.9 12.6 5.3 12.4 4.6 C12.2 3.9 11.4 3.6 10.7 4 L10.3 3.2 C11 2.4 12.4 2.3 13.4 3 C14.4 3.8 14.8 5 14.4 6.2 C14.1 7.2 13.5 7.9 12.8 8.6 C12.3 9.2 12.1 9.8 12.1 10.6 V12.4 C12.1 13.1 11.7 13.5 11.2 13.5 C10.7 13.5 10.4 13.2 10.3 12.7 C10.1 12 9.1 12 8.9 12.7 C8.8 13.2 8.5 13.5 8 13.5 C7.5 13.5 7.2 13.2 7.1 12.7 C6.9 12 5.9 12 5.7 12.7 C5.6 13.2 5.3 13.5 4.8 13.5 C4.3 13.5 4 13.2 3.9 12.7 C3.6 11.9 2 11.9 1.7 12.7 C1.6 13.2 1.2 13.5 0.6 13.5 Z" fill="#afb1b3" fill-opacity="1"/><path d="M2 6 C2.6 7.6 3.2 8.4 3.9 8.3 C4.8 8.1 5.6 7.5 6.4 7" fill="none" stroke="#3c3f41" stroke-width=".55"/><circle cx="9.5" cy="6.9" r=".45" fill="#3c3f41"/></svg>
<svg style="left:2181px;top:1167.5px" width="28" height="28" viewBox="0 0 16 16" ><path d="M8 1.5 C11 1.5 12.2 4 12.4 7 C12.5 9 13.4 10.6 14.6 11.6 H1.4 C2.6 10.6 3.5 9 3.6 7 C3.8 4 5 1.5 8 1.5 Z" fill="#afb1b3"/><path d="M5.8 12.6 H10.2 C10.2 15.2 5.8 15.2 5.8 12.6 Z" fill="#afb1b3"/><circle cx="12.6" cy="3" r="3.7" fill="#3c3f41"/><circle cx="12.6" cy="3" r="2.8" fill="#c75450"/></svg>
<div class="t" style="left:2196px;top:293.5px;font-size:22px;width:0;height:0;overflow:visible"><div style="position:absolute;left:-49.5px;top:-13px;width:99px;height:26px;line-height:26px;text-align:center;transform:rotate(90deg);letter-spacing:0.539px">Database</div></div>
<div class="t" style="left:2196px;top:451.0px;font-size:22px;width:0;height:0;overflow:visible"><div style="position:absolute;left:-34.0px;top:-13px;width:68px;height:26px;line-height:26px;text-align:center;transform:rotate(90deg);letter-spacing:0.242px">Gradle</div></div>
<div class="t" style="left:2196px;top:1268.0px;font-size:22px;width:0;height:0;overflow:visible"><div style="position:absolute;left:-66.0px;top:-13px;width:132px;height:26px;line-height:26px;text-align:center;transform:rotate(90deg);letter-spacing:0.897px">Notifications</div></div>
<div class="t" style="left:132px;top:244.0px;font-size:22px;color:#e6e6e6;width:0;height:0;overflow:visible"><div style="position:absolute;left:-37.0px;top:-13px;width:74px;height:26px;line-height:26px;text-align:center;transform:rotate(-90deg);letter-spacing:0.717px">Project</div></div>
<svg style="left:117px;top:287px" width="32" height="32" viewBox="0 0 16 16" ><path d="M2.5 3 H7 L8.6 5 H13.5 V12.5 H2.5 Z" fill="#b4b6b8"/></svg>
<div class="t" style="left:132px;top:1058.5px;font-size:22px;width:0;height:0;overflow:visible"><div style="position:absolute;left:-49.5px;top:-13px;width:99px;height:26px;line-height:26px;text-align:center;transform:rotate(-90deg);letter-spacing:1.026px">Structure</div></div>
<svg style="left:119.5px;top:1115.8px" width="26" height="26" viewBox="0 0 16 16" ><rect x="8.6" y="2.6" width="4.6" height="4.6" fill="#afb1b3"/><rect x="8.6" y="8.6" width="4.6" height="4.6" fill="#afb1b3"/><rect x="2.6" y="8.6" width="4.6" height="4.6" fill="#afb1b3"/></svg>
<div class="t" style="left:132px;top:1241.0px;font-size:22px;width:0;height:0;overflow:visible"><div style="position:absolute;left:-58.0px;top:-13px;width:116px;height:26px;line-height:26px;text-align:center;transform:rotate(-90deg);letter-spacing:0.606px">Bookmarks</div></div>
<svg style="left:117px;top:1305px" width="32" height="32" viewBox="0 0 16 16" ><path d="M3.4 2.4 H12.6 V13.6 L8 10.4 L3.4 13.6 Z" fill="#afb1b3"/></svg>
<div class="a" style="left:112px;top:1358px;width:2104px;height:84px;background:#3c3f41"></div>
<div class="a" style="left:112px;top:1358px;width:2104px;height:2px;background:#323232"></div>
<div class="a" style="left:112px;top:1400px;width:2104px;height:2px;background:#464849"></div>
<svg style="left:175px;top:1368px" width="26" height="26" viewBox="0 0 16 16" ><circle cx="5" cy="3" r="1.9" fill="#afb1b3"/><circle cx="5" cy="13" r="1.9" fill="#afb1b3"/><circle cx="11.4" cy="5.4" r="1.9" fill="#afb1b3"/><path d="M5 3 V13 M11.4 5.4 V6.6 Q11.4 8.7 8.2 8.9 Q5.2 9.1 5 11" fill="none" stroke="#afb1b3" stroke-width="1.6"/></svg>
<div class="t" style="left:210px;top:1370px;font-size:22px;letter-spacing:0.672px;">Version Control</div>
<svg style="left:417px;top:1368px" width="26" height="26" viewBox="0 0 16 16" ><rect x="2" y="3" width="2.2" height="2.2" fill="#afb1b3"/><rect x="5.6" y="3" width="8.4" height="2.2" fill="#afb1b3"/><rect x="2" y="7" width="2.2" height="2.2" fill="#afb1b3"/><rect x="5.6" y="7" width="8.4" height="2.2" fill="#afb1b3"/><rect x="2" y="11" width="2.2" height="2.2" fill="#afb1b3"/><rect x="5.6" y="11" width="8.4" height="2.2" fill="#afb1b3"/></svg>
<div class="t" style="left:450px;top:1370px;font-size:22px;letter-spacing:-0.164px;">TODO</div>
<svg style="left:554px;top:1368px" width="26" height="26" viewBox="0 0 16 16" ><circle cx="8" cy="8" r="6.6" fill="#afb1b3"/><rect x="7" y="4" width="2" height="5.2" fill="#3c3f41"/><rect x="7" y="10.2" width="2" height="2" fill="#3c3f41"/></svg>
<div class="t" style="left:587.5px;top:1370px;font-size:22px;letter-spacing:0.697px;">Problems</div>
<svg style="left:728px;top:1368px" width="26" height="26" viewBox="0 0 16 16" ><rect x="1" y="2" width="14" height="12.4" fill="#afb1b3"/><path d="M3 4.6 L6.4 7.6 L3 10.6" fill="none" stroke="#3c3f41" stroke-width="1.4"/><rect x="7" y="10.6" width="4.6" height="1.3" fill="#3c3f41"/></svg>
<div class="t" style="left:762px;top:1370px;font-size:22px;letter-spacing:0.482px;">Terminal</div>
<svg style="left:892px;top:1368px" width="26" height="26" viewBox="0 0 16 16" ><path d="M12.6 5.6 A5.6 5.6 0 1 0 7 12.6" fill="none" stroke="#afb1b3" stroke-width="1.5"/><path d="M7.2 3.4 V7.2 L5 9" fill="none" stroke="#afb1b3" stroke-width="1.5"/><path d="M9.2 6.6 L16 11 L9.2 15.4 Z" fill="#afb1b3"/></svg>
<div class="t" style="left:926px;top:1370px;font-size:22px;letter-spacing:0.664px;">Profiler</div>
<svg style="left:1042px;top:1368px" width="26" height="26" viewBox="0 0 16 16" ><path d="M4.4 1.6 H11.6 L15.6 8 L11.6 14.4 H4.4 L0.4 8 Z" fill="#afb1b3"/><path d="M6 4.4 L11.6 8 L6 11.6 Z" fill="#3c3f41"/></svg>
<div class="t" style="left:1076px;top:1370px;font-size:22px;letter-spacing:0.643px;">Services</div>
<svg style="left:1206px;top:1368px" width="26" height="26" viewBox="0 0 16 16" ><g transform="translate(5.5 4.8) rotate(-45)" fill="#afb1b3"><path d="M-4.7 -1.5 H4.6 L3.3 1.5 H-4.7 Z"/><path d="M-1.1 1.5 H1.1 V4.6 L1.5 5.1 V12.3 H-1.5 V5.1 L-1.1 4.6 Z"/></g></svg>
<div class="t" style="left:1239.5px;top:1370px;font-size:22px;letter-spacing:0.716px;">Build</div>
<svg style="left:1334px;top:1368px" width="26" height="26" viewBox="0 0 16 16" ><path d="M8 1 L15 4.6 L8 8.2 L1 4.6 Z" fill="#afb1b3"/><path d="M1 8 L2.9 7 L8 9.7 L13.1 7 L15 8 L8 11.6 Z" fill="#afb1b3"/><path d="M1 11.2 L2.9 10.2 L8 12.9 L13.1 10.2 L15 11.2 L8 14.8 Z" fill="#afb1b3"/></svg>
<div class="t" style="left:1367.5px;top:1370px;font-size:22px;letter-spacing:0.777px;">Dependencies</div>
<svg style="left:1564px;top:1368px" width="26" height="26" viewBox="0 0 16 16" ><circle cx="10" cy="3.2" r="2.7" fill="#afb1b3"/><circle cx="3.4" cy="12.6" r="2.7" fill="#afb1b3"/><circle cx="13" cy="12.6" r="2.7" fill="#afb1b3"/><path d="M3.4 12.6 L1.2 6.6 M3.4 12.6 L10 3.2 L13 12.6" fill="none" stroke="#afb1b3" stroke-width="1.5"/></svg>
<div class="t" style="left:1597.5px;top:1370px;font-size:22px;letter-spacing:0.793px;">Endpoints</div>
<svg style="left:123px;top:1409px" width="26" height="26" viewBox="0 0 16 16" ><path d="M3.8 1 H14.6 V11.8 H3.8 Z" fill="none" stroke="#afb1b3" stroke-width="1.2"/><path d="M1.2 3.8 V14.6 H12" fill="none" stroke="#afb1b3" stroke-width="1.2"/></svg>
<div class="t" style="left:173.5px;top:1412px;font-size:22px;letter-spacing:0.708px;">Kotlin: A new version 222-1.7.20-release-201-IJ4167.29 of the Kotlin plugin is available // Install (a minute ago)</div>
<div class="t" style="left:1793px;top:1412px;font-size:22px;letter-spacing:-0.207px;">18:1</div>
<div class="t" style="left:1859.5px;top:1412px;font-size:22px;letter-spacing:0.056px;">LF</div>
<div class="t" style="left:1909.5px;top:1412px;font-size:22px;letter-spacing:1.094px;">UTF-8</div>
<div class="t" style="left:2001.5px;top:1412px;font-size:22px;letter-spacing:0.842px;">4 spaces</div>
<svg style="left:2116px;top:1407.5px" width="26" height="26" viewBox="0 0 16 16" ><rect x="5" y="7" width="9.6" height="7.6" fill="#afb1b3"/><path d="M2 7.4 V4.6 C2 1.4 6.6 1.4 6.6 4.6 V7.4" fill="none" stroke="#afb1b3" stroke-width="1.7"/></svg>
<svg style="left:2163px;top:1405px" width="35" height="35" viewBox="0 0 16 16" ><path d="M4.2 11.2 C0.2 11.2 0.2 6.2 3.4 5.6 C3.6 1.2 9.8 0.4 11.2 4.4 C14.4 4.4 15.2 7 14.6 8.6 C13.6 7.4 11.6 7 10.2 8 C9 8.8 8.6 10 8.7 11.2 Z" fill="#afb1b3"/><text x="7.2" y="8.9" text-anchor="middle" font-family="Liberation Sans, sans-serif" font-weight="bold" font-size="8.4" fill="#3c3f41">?</text><g transform="translate(12.2 12) scale(.5)"><rect x="-1.5" y="-6.8" width="3" height="13.6" fill="#afb1b3" transform="rotate(0)"/><rect x="-1.5" y="-6.8" width="3" height="13.6" fill="#afb1b3" transform="rotate(60)"/><rect x="-1.5" y="-6.8" width="3" height="13.6" fill="#afb1b3" transform="rotate(120)"/><circle r="4.9" fill="#afb1b3"/><circle r="2.2" fill="#3c3f41"/></g></svg>
</div><div id="rim"></div></div>
</body></html>
